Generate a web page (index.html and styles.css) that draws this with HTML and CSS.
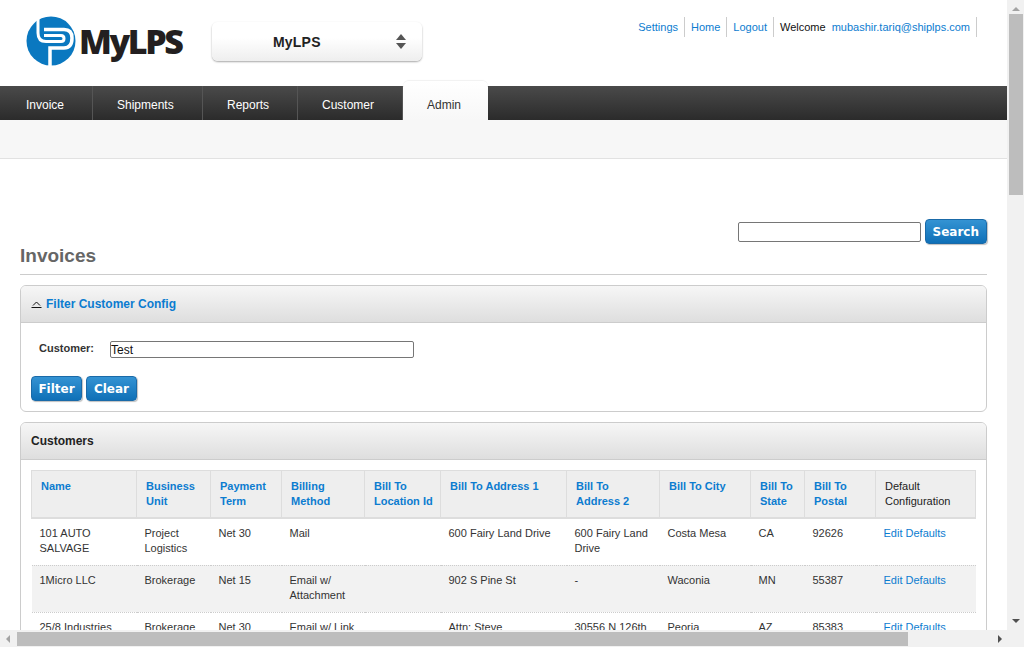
FILE: index.html
```html
<!DOCTYPE html>
<html lang="en">
<head>
    <meta charset="UTF-8">
    <title>MyLPS - Invoices</title>
    <link rel="stylesheet" href="styles.css">
</head>
<body>
    <div class="window">
        <div class="page">
            <div class="page-inner">
                <header class="top">
                    <div class="logo">
                        <svg class="logo-mark" viewBox="0 0 50 50" width="50" height="50">
                            <circle cx="25" cy="25" r="24.5" fill="#0a78c0"/>
                            <path d="M18 13.5H38Q46 13.5 46 22Q46 32 38 32H24V50" fill="none" stroke="#fff" stroke-width="3.5"/>
                            <path d="M12 1V17Q12 25.5 20 25.5H35Q38 25.5 38 22.5Q38 19.5 35 19.5H18" fill="none" stroke="#fff" stroke-width="3"/>
                        </svg>
                        <span class="logo-text">MyLPS</span>
                    </div>
                    <div class="app-select">
                        <span class="app-name">MyLPS</span>
                        <span class="updown"><i class="up"></i><i class="down"></i></span>
                    </div>
                    <ul class="top-links">
                        <li><a href="#">Settings</a></li>
                        <li><a href="#">Home</a></li>
                        <li><a href="#">Logout</a></li>
                        <li><span class="welcome">Welcome</span><a href="#">mubashir.tariq@shiplps.com</a></li>
                    </ul>
                </header>

                <nav class="nav">
                    <a href="#" class="w-inv">Invoice</a>
                    <a href="#" class="w-ship">Shipments</a>
                    <a href="#" class="w-rep">Reports</a>
                    <a href="#" class="w-cust">Customer</a>
                    <a href="#" class="active">Admin</a>
                </nav>
                <div class="subnav"></div>

                <main class="content">
                    <form class="search-row">
                        <input type="text" class="search-input">
                        <button type="button" class="btn">Search</button>
                    </form>
                    <h1 class="title">Invoices</h1>

                    <section class="panel panel-filter">
                        <div class="panel-head">
                            <svg class="chev" viewBox="0 0 11 7" width="11" height="7"><path d="M.5 6.5h10M2 4.5 5.5 1 9 4.5" fill="none" stroke="#111" stroke-width="1"/></svg>
                            <a href="#" class="panel-link">Filter Customer Config</a>
                        </div>
                        <div class="filter-body">
                            <div class="filter-row">
                                <label for="customer">Customer:</label>
                                <input id="customer" type="text" class="customer-input" value="Test">
                            </div>
                            <div class="filter-btns">
                                <button type="button" class="btn">Filter</button>
                                <button type="button" class="btn">Clear</button>
                            </div>
                        </div>
                    </section>

                    <section class="panel panel-list">
                        <div class="panel-head"><span class="panel-title">Customers</span></div>
                        <div class="table-wrap">
                            <table class="grid">
                                <colgroup>
                                    <col class="c1"><col class="c2"><col class="c3"><col class="c4"><col class="c5"><col class="c6">
                                    <col class="c7"><col class="c8"><col class="c9"><col class="c10"><col class="c11">
                                </colgroup>
                                <thead>
                                    <tr>
                                        <th><a href="#">Name</a></th>
                                        <th><a href="#">Business Unit</a></th>
                                        <th><a href="#">Payment Term</a></th>
                                        <th><a href="#">Billing Method</a></th>
                                        <th><a href="#">Bill To Location Id</a></th>
                                        <th><a href="#">Bill To Address 1</a></th>
                                        <th><a href="#">Bill To Address 2</a></th>
                                        <th><a href="#">Bill To City</a></th>
                                        <th><a href="#">Bill To State</a></th>
                                        <th><a href="#">Bill To Postal</a></th>
                                        <th>Default Configuration</th>
                                    </tr>
                                </thead>
                                <tbody>
                                    <tr>
                                        <td>101 AUTO SALVAGE</td><td>Project Logistics</td><td>Net 30</td><td>Mail</td><td></td>
                                        <td>600 Fairy Land Drive</td><td>600 Fairy Land Drive</td><td>Costa Mesa</td><td>CA</td><td>92626</td>
                                        <td><a href="#">Edit Defaults</a></td>
                                    </tr>
                                    <tr class="alt">
                                        <td>1Micro LLC</td><td>Brokerage</td><td>Net 15</td><td>Email w/ Attachment</td><td></td>
                                        <td>902 S Pine St</td><td>-</td><td>Waconia</td><td>MN</td><td>55387</td>
                                        <td><a href="#">Edit Defaults</a></td>
                                    </tr>
                                    <tr>
                                        <td>25/8 Industries</td><td>Brokerage</td><td>Net 30</td><td>Email w/ Link</td><td></td>
                                        <td>Attn: Steve</td><td>30556 N 126th</td><td>Peoria</td><td>AZ</td><td>85383</td>
                                        <td><a href="#">Edit Defaults</a></td>
                                    </tr>
                                </tbody>
                            </table>
                        </div>
                    </section>
                </main>
            </div>
        </div>

        <div class="vbar">
            <span class="arrow arrow-up"></span>
            <div class="vtrack"><div class="vthumb"></div></div>
            <span class="arrow arrow-down"></span>
        </div>
        <div class="hbar">
            <span class="arrow arrow-left"></span>
            <div class="htrack"><div class="hthumb"></div></div>
            <span class="arrow arrow-right"></span>
        </div>
        <div class="corner"></div>
    </div>
</body>
</html>
```

FILE: styles.css
```css
html, body {
    margin: 0;
    height: 100%;
    overflow: hidden;
}
body {
    font-family: "Liberation Sans", Arial, sans-serif;
    font-size: 11px;
    color: #333;
    background: #fff;
}
a {
    color: #0c7cd0;
    text-decoration: none;
}

/* window with its scrollbars */
.window {
    display: grid;
    grid-template-columns: 1007px 17px;
    grid-template-rows: 630px 17px;
    width: 1024px;
    height: 647px;
}
.page {
    overflow: hidden;
}
.page-inner {
    width: 1007px;
}
.vbar, .hbar, .corner {
    background: #f1f1f1;
}
.vbar {
    display: flex;
    flex-direction: column;
    align-items: center;
}
.hbar {
    display: flex;
    align-items: center;
}
.vtrack {
    flex: 1;
    width: 100%;
}
.vthumb {
    width: 14px;
    height: 181px;
    margin-left: 2px;
    background: #bdbdbd;
}
.htrack {
    flex: 1;
    height: 100%;
}
.hthumb {
    width: 891px;
    height: 14px;
    margin-top: 2px;
    background: #bdbdbd;
}
.arrow {
    flex: none;
    width: 0;
    height: 0;
    border-style: solid;
    border-color: transparent;
}
.arrow-up {
    margin: 7px 0 3px;
    border-width: 0 4px 4px;
    border-bottom-color: #a3a3a3;
}
.arrow-down {
    margin: 3px 0 7px;
    border-width: 4px 4px 0;
    border-top-color: #505050;
}
.arrow-left {
    margin: 0 7px 0 6px;
    border-width: 4px 4px 4px 0;
    border-right-color: #a3a3a3;
}
.arrow-right {
    margin: 0 5px 0 4px;
    border-width: 4px 0 4px 4px;
    border-left-color: #505050;
}

/* header */
.top {
    display: flex;
    height: 86px;
}
.logo {
    display: flex;
    align-items: center;
    width: 186px;
    height: 50px;
    margin: 16px 0 0 26px;
}
.logo-mark {
    flex: none;
}
.logo-text {
    margin-left: 3px;
    font-family: "Open Sans", sans-serif;
    font-size: 34px;
    font-weight: 800;
    letter-spacing: -2.4px;
    color: #231f20;
}
.app-select {
    display: flex;
    align-items: center;
    justify-content: space-between;
    box-sizing: border-box;
    width: 210px;
    height: 39px;
    margin-top: 22px;
    padding: 0 16px 0 61px;
    border-radius: 6px;
    background: linear-gradient(#fff 40%, #eee);
    box-shadow: 0 1px 2px rgba(0, 0, 0, 0.35);
}
.app-name {
    font-size: 14px;
    font-weight: bold;
    letter-spacing: 0.2px;
    color: #222;
}
.updown i {
    display: block;
    width: 0;
    height: 0;
    border-left: 5px solid transparent;
    border-right: 5px solid transparent;
}
.updown .up {
    margin-bottom: 3px;
    border-bottom: 6px solid #555;
}
.updown .down {
    border-top: 6px solid #555;
}
.top-links {
    display: flex;
    height: 20px;
    margin: 17px 0 0 auto;
    padding: 0 30px 0 0;
    list-style: none;
    font-size: 11px;
    line-height: 20px;
}
.top-links li {
    padding: 0 6px;
    border-right: 1px solid #ccc;
}
.welcome {
    margin-right: 6px;
    color: #111;
}

/* nav */
.nav {
    display: flex;
    height: 34px;
    background: linear-gradient(#4a4a4a, #2b2b2b);
}
.nav a {
    box-sizing: border-box;
    padding-left: 24px;
    border-right: 1px solid #555;
    color: #fff;
    font-size: 12px;
    line-height: 38px;
}
.nav .w-inv { width: 93px; padding-left: 26px; }
.nav .w-ship { width: 110px; }
.nav .w-rep { width: 95px; }
.nav .w-cust { width: 105px; }
.nav .active {
    width: 85px;
    height: 39px;
    margin-top: -5px;
    border-right: 0;
    border-radius: 6px 6px 0 0;
    background: linear-gradient(#fff, #f7f7f7);
    box-shadow: 0 -1px 1px rgba(0, 0, 0, 0.06);
    color: #333;
    line-height: 48px;
}
.subnav {
    height: 38px;
    background: #f7f7f7;
    border-bottom: 1px solid #e2e2e2;
}

/* content */
.content {
    padding: 60px 20px 0;
}
.search-row {
    display: flex;
    justify-content: flex-end;
    align-items: center;
    gap: 4px;
    margin: 0;
}
.search-input {
    box-sizing: border-box;
    width: 183px;
    height: 20px;
    padding: 1px 2px;
    border: 1px solid #767676;
    border-radius: 2px;
}
.btn {
    height: 25px;
    padding: 0 7px;
    border: 1px solid #1a6aa8;
    border-radius: 4px;
    background: linear-gradient(#3493d3, #0f70b7);
    box-shadow: 1px 1px 1px rgba(0, 0, 0, 0.25);
    color: #fff;
    font-family: "DejaVu Sans", sans-serif;
    font-size: 12px;
    font-weight: bold;
}
.title {
    margin: 0;
    padding: 0 0 6px;
    border-bottom: 1px solid #ccc;
    color: #666;
    font-size: 19px;
    line-height: 24px;
    font-weight: bold;
}
.panel {
    margin-top: 10px;
    border: 1px solid #ccc;
    border-radius: 6px;
}
.panel-head {
    display: flex;
    align-items: center;
    gap: 4px;
    box-sizing: border-box;
    height: 37px;
    padding: 0 10px;
    border-bottom: 1px solid #ccc;
    border-radius: 5px 5px 0 0;
    background: linear-gradient(#f6f6f6, #dedede);
}
.panel-link {
    font-size: 12px;
    font-weight: bold;
}
.panel-title {
    font-size: 12px;
    font-weight: bold;
    color: #222;
}
.filter-body {
    height: 88px;
    padding: 0 10px;
}
.filter-row {
    display: flex;
    align-items: center;
    height: 20px;
    padding-top: 16px;
}
.filter-row label {
    width: 71px;
    padding: 0 0 3px 8px;
    font-weight: bold;
    color: #333;
}
.customer-input {
    box-sizing: border-box;
    width: 304px;
    height: 17px;
    padding: 1px 0 0;
    border: 1px solid #767676;
    border-radius: 2px;
    font-family: "Liberation Sans", Arial, sans-serif;
    font-size: 12px;
    color: #111;
}
.filter-btns {
    display: flex;
    gap: 4px;
    margin-top: 17px;
}
.filter-btns .btn {
    width: 51px;
    padding: 0;
}
.panel-list {
    height: 260px;
}
.table-wrap {
    padding: 10px;
}
.grid {
    table-layout: fixed;
    border-collapse: collapse;
    width: 944px;
    line-height: 15px;
}
.c1 { width: 105px; }
.c2 { width: 74px; }
.c3 { width: 71px; }
.c4 { width: 83px; }
.c5 { width: 76px; }
.c6 { width: 126px; }
.c7 { width: 93px; }
.c8 { width: 91px; }
.c9 { width: 54px; }
.c10 { width: 71px; }
.c11 { width: 100px; }
.grid th {
    height: 47px;
    box-sizing: border-box;
    padding: 8px 7px 8px 9px;
    border: 1px solid #ddd;
    border-bottom-width: 2px;
    background: #eee;
    color: #222;
    text-align: left;
    vertical-align: top;
    font-weight: normal;
}
.grid th a {
    font-weight: bold;
}
.grid td {
    height: 47px;
    box-sizing: border-box;
    padding: 7px 9px 8px 8px;
    border-bottom: 1px dotted #ccc;
    vertical-align: top;
}
.grid .alt td {
    background: #f2f2f2;
}
```
